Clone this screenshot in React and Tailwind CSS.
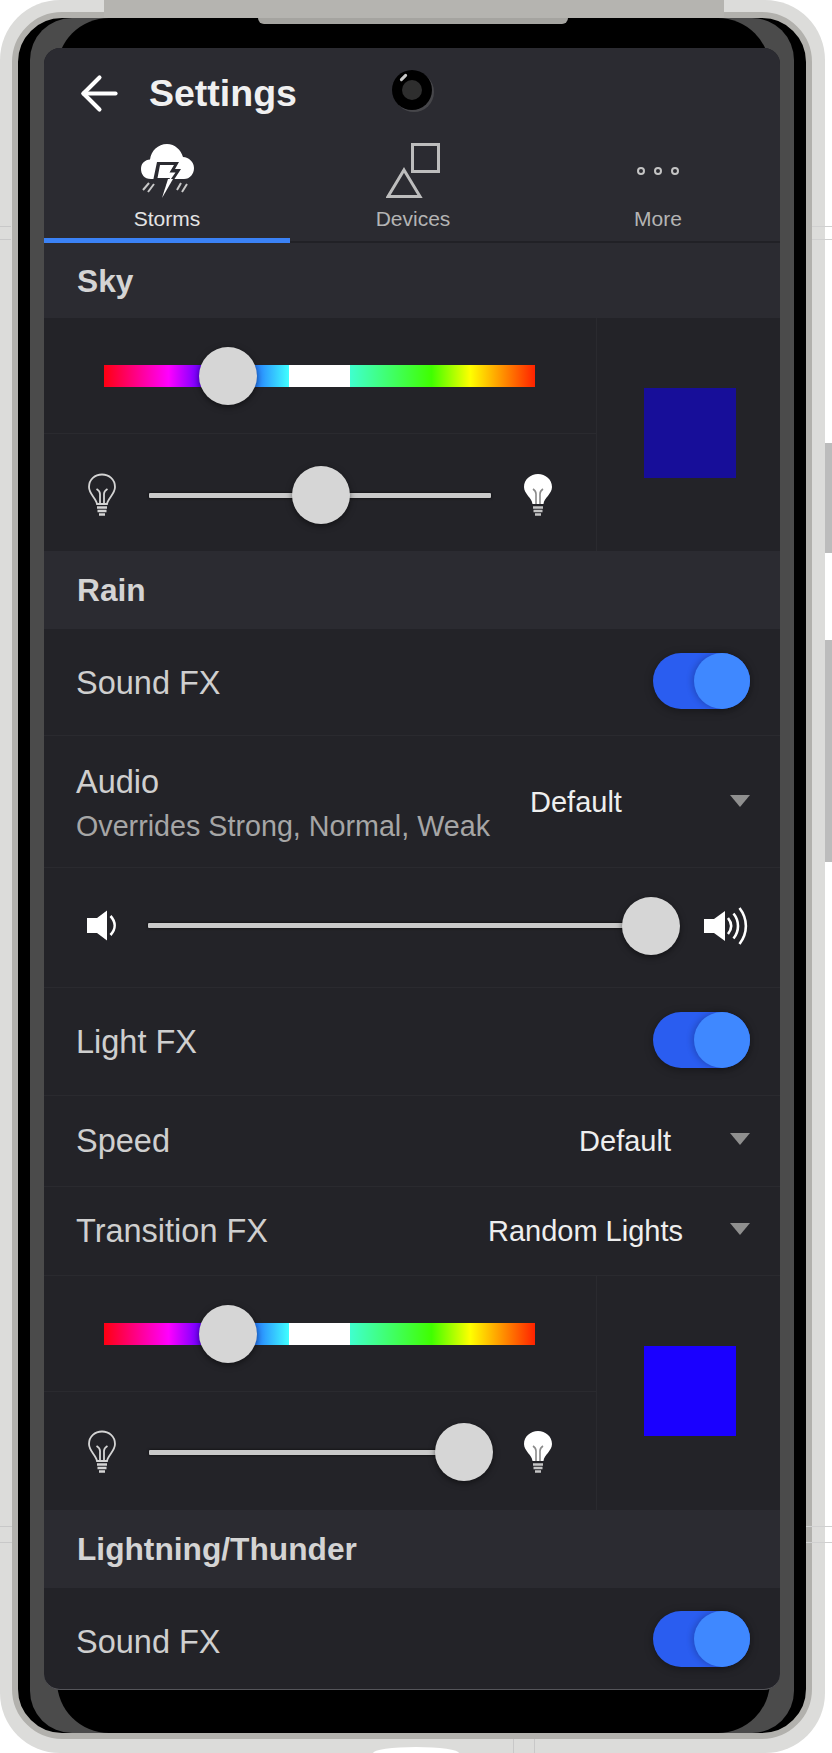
import React from 'react'
import { ArrowLeft } from 'lucide-react'

const hueBar =
  'h-[22px] w-[431px] bg-[linear-gradient(90deg,#ff0010_0%,#ff00ff_15%,#2000ff_26%,#2a8cff_36%,#40ffff_42.9%,#ffffff_42.9%,#ffffff_57%,#40ffd0_57%,#40ff00_76%,#ffff00_85%,#ff2200_100%)]'
const knob = 'absolute top-1/2 h-[58px] w-[58px] -translate-x-1/2 -translate-y-1/2 rounded-full bg-[#d6d6d6] shadow-[0_2px_6px_rgba(0,0,0,0.5)]'
const labelText = 'text-[32.5px] leading-none text-[#cfcfcf]'
const headerText = 'mt-[2px] text-[31.7px] font-bold leading-none text-[#d4d4d4]'
const valueText = 'text-[29px] leading-none text-[#eeeeee]'
const rowBorder = 'border-b border-[#2a2a2f]'

function BulbOutline() {
  return (
    <svg width="30" height="45" viewBox="0 0 30 45" fill="none" stroke="#d4d4d4" strokeWidth="1.8">
      <path d="M10 31 C9 25 2 21 2 14 C2 6.5 8 1.5 15 1.5 C22 1.5 28 6.5 28 14 C28 21 21 25 20 31 Z" />
      <path d="M13 31 V21 C13 18 11 17 9.5 16 M17 31 V21 C17 18 19 17 20.5 16" />
      <path d="M10 34.5 H20 M10.5 38 H19.5 M12 41.5 H18" strokeWidth="2.6" />
    </svg>
  )
}

function BulbFilled() {
  return (
    <svg width="30" height="45" viewBox="0 0 30 45" fill="none">
      <path d="M9.5 31 C9 25 1 21 1 14 C1 6.5 7.5 1 15 1 C22.5 1 29 6.5 29 14 C29 21 21 25 20.5 31 Z" fill="#ffffff" />
      <path d="M13 31 V21 C13 18 11.5 17 10 16 M17 31 V21 C17 18 18.5 17 20 16" stroke="#8a8a8a" strokeWidth="1.6" />
      <path d="M10 34.5 H20 M10.5 38 H19.5 M12 41.5 H18" stroke="#c4c4c4" strokeWidth="2.6" />
    </svg>
  )
}

function SpeakerLow() {
  return (
    <svg width="29" height="31" viewBox="0 0 29 31" fill="none">
      <path d="M0 8 H10 L20 0.5 V30.5 L10 23 H0 Z" fill="#ffffff" />
      <path d="M23.5 6 C29 12 29 19 23.5 25" stroke="#ffffff" strokeWidth="2.6" />
    </svg>
  )
}

function SpeakerHigh() {
  return (
    <svg width="46" height="38" viewBox="0 0 46 38" fill="none" stroke="#ffffff" strokeWidth="2.6">
      <path d="M1 12 H11 L22 4 V34 L11 26 H1 Z" fill="#ffffff" stroke="none" />
      <path d="M25 11 C29 16 29 22 25 27" />
      <path d="M30.5 6.5 C36.5 14 36.5 24 30.5 31.5" />
      <path d="M36.5 1 C45 12 45 26 36.5 37" />
    </svg>
  )
}

function StormIcon() {
  return (
    <svg width="53" height="54" viewBox="0 0 53 54" fill="none">
      <path d="M10 35 C3 35 0 30 0 25 C0 19 4 16 9 15.5 C10 7 17 0 26 0 C34 0 40 6 42 13 C48 13.5 53 18 53 24 C53 30 49 35 43 35 Z" fill="#ffffff" />
      <path d="M16 18 H38 L34 25 H40 L21 54 L25 37 H12 Z" fill="#2b2b31" />
      <path d="M19 21 H33 L28.5 28.5 H34.5 L25 42 L29 34 H16.5 Z" fill="#ffffff" />
      <path d="M21 54 L27 35 H32 Z" fill="#ffffff" />
      <path d="M8 39 L2 46 M13 40 L7 48 M40 39 L36 46 M46 40 L41 48" stroke="#c8c8c8" strokeWidth="2" />
    </svg>
  )
}

function DevicesIcon() {
  return (
    <svg width="54" height="56" viewBox="0 0 54 56" fill="none" stroke="#bdbdbd" strokeWidth="3">
      <rect x="26.5" y="1.5" width="26" height="27" />
      <path d="M18 27 L34 53.5 H2 Z" />
    </svg>
  )
}

function MoreIcon() {
  return (
    <svg width="42" height="10" viewBox="0 0 42 10" fill="none" stroke="#c4c4c4" strokeWidth="2">
      <circle cx="4" cy="5" r="3" />
      <circle cx="21" cy="5" r="3" />
      <circle cx="38" cy="5" r="3" />
    </svg>
  )
}

function Tab({ icon, label, active, width }) {
  return (
    <div className={`flex h-[105px] flex-col items-center pt-[5px] ${width} ${active ? 'border-b-[5px] border-[#3b82f6]' : 'border-b-2 border-[#212126]'}`}>
      <div className="flex h-[55px] items-center justify-center">{icon}</div>
      <div className={`mt-[8px] text-[21px] leading-[26px] ${active ? 'text-[#e4e4e4]' : 'text-[#b4b4b4]'}`}>{label}</div>
    </div>
  )
}

function SectionHeader({ title, height = 'h-[78px]' }) {
  return (
    <div className={`flex items-center bg-[#2b2b31] pl-[33px] ${height}`}>
      <span className={headerText}>{title}</span>
    </div>
  )
}

function Toggle({ shift }) {
  return (
    <div className={`flex h-[56px] w-[97px] justify-end rounded-full bg-[#2a5df0] shadow-[0_2px_8px_rgba(0,0,0,0.35)] ${shift}`}>
      <div className="h-[56px] w-[56px] rounded-full bg-[#3f88ff] shadow-[-2px_0_6px_rgba(0,0,0,0.2)]" />
    </div>
  )
}

function ToggleRow({ label, border = true, height = 'h-[107px]', shift = '-mt-[2px]', labelShift = 'mt-[2px]' }) {
  return (
    <div className={`flex items-center justify-between pl-[32px] pr-[30px] ${height} ${border ? rowBorder : ''}`}>
      <span className={`${labelShift} ${labelText}`}>{label}</span>
      <Toggle shift={shift} />
    </div>
  )
}

function Caret() {
  return <div className="h-0 w-0 border-x-[10.5px] border-t-[12px] border-x-transparent border-t-[#8f8f8f]" />
}

function Track({ width, at }) {
  return (
    <div className={`relative h-[5px] rounded-[1px] bg-[#c9c9c9] shadow-[0_0_3px_rgba(0,0,0,0.8)] ${width}`}>
      <div className={knob} style={{ left: at }} />
    </div>
  )
}

function ColorPanel({ swatch, hueAt, dimAt, height, dimPad, swatchPad }) {
  return (
    <div className={`flex ${height}`}>
      <div className="flex w-[553px] flex-col border-r border-[#2a2a2f]">
        <div className={`flex h-[116px] items-center pl-[60px] ${rowBorder}`}>
          <div className={`relative ${hueBar}`}>
            <div className={knob} style={{ left: hueAt }} />
          </div>
        </div>
        <div className={`flex flex-1 items-center gap-[32px] pl-[43px] ${dimPad}`}>
          <BulbOutline />
          <Track width="w-[342px]" at={dimAt} />
          <BulbFilled />
        </div>
      </div>
      <div className={`flex flex-1 items-center justify-center pl-[2px] ${swatchPad}`}>
        <div className={`h-[90px] w-[92px] ${swatch}`} />
      </div>
    </div>
  )
}

export default function App() {
  return (
    <div className="relative h-[1753px] w-[832px] overflow-hidden bg-white font-['Liberation_Sans',Arial,sans-serif]">
      {/* phone body */}
      <div className="h-[1753px] w-[825px] rounded-[60px] bg-[#dcdcda] pb-[14px] pl-[12px] pr-[13px] pt-[12px]">
        <div className="h-full rounded-[50px] border-[6px] border-[#b2b1ad] bg-black pl-[6px] pr-[12px] shadow-[inset_0_0_0_1px_#000]">
          <div className="relative ml-[6px] h-full rounded-[42px] bg-[#4b4b4b] px-[14px] pt-[30px]">
            <div className="absolute inset-y-0 left-[27px] right-[24px] rounded-[52px] bg-black" />

            {/* screen */}
            <div className="relative h-[1642px] overflow-hidden rounded-[16px] border-b border-[#55555a] bg-[#232328]">
              <div className="bg-[#2b2b31]">
                <div className="flex h-[90px] items-center gap-[22px] pl-[28px]">
                  <ArrowLeft size={55} strokeWidth={1.8} className="text-white" />
                  <span className="mt-[1px] text-[37.5px] font-bold leading-none text-[#f0f0f0]">Settings</span>
                </div>
                <div className="flex">
                  <Tab icon={<StormIcon />} label="Storms" active width="w-[246px]" />
                  <Tab icon={<DevicesIcon />} label="Devices" width="w-[246px]" />
                  <Tab icon={<MoreIcon />} label="More" width="flex-1" />
                </div>
              </div>

              {/* lens sits over the title bar */}
              <div className="absolute left-[348px] top-[22px] flex h-[40px] w-[40px] items-center justify-center rounded-full bg-black shadow-[2px_2px_0_#46464a]">
                <div className="h-[20px] w-[20px] rounded-full bg-[#2e2e2e]" />
                <div className="absolute left-[7px] top-[6px] h-[3px] w-[9px] -rotate-45 rounded-full bg-[#c8c8c8]" />
              </div>

              <SectionHeader title="Sky" height="h-[75px]" />
              <ColorPanel swatch="bg-[#170e99]" hueAt="124px" dimAt="172px" height="h-[233px]" dimPad="pt-[5px]" swatchPad="pb-[3px]" />

              <SectionHeader title="Rain" />
              <ToggleRow label="Sound FX" />

              <div className={`flex h-[132px] items-center pl-[32px] pr-[30px] ${rowBorder}`}>
                <div className="mt-[4px] flex flex-col gap-[14px]">
                  <span className={labelText}>Audio</span>
                  <span className="text-[28.7px] leading-none text-[#a6a6a6]">Overrides Strong, Normal, Weak</span>
                </div>
                <div className="ml-auto flex w-[220px] items-center justify-between">
                  <span className={`mt-[2px] ${valueText}`}>Default</span>
                  <div className="-mt-[2px]"><Caret /></div>
                </div>
              </div>

              <div className={`flex h-[120px] items-center pb-[4px] pl-[43px] ${rowBorder}`}>
                <SpeakerLow />
                <div className="ml-[32px]">
                  <Track width="w-[503px]" at="503px" />
                </div>
                <div className="ml-[52px]">
                  <SpeakerHigh />
                </div>
              </div>

              <ToggleRow label="Light FX" height="h-[108px]" shift="-mt-[4px]" />

              <div className={`flex h-[91px] items-center pl-[32px] pr-[30px] ${rowBorder}`}>
                <span className={labelText}>Speed</span>
                <span className={`ml-auto ${valueText}`}>Default</span>
                <div className="-mt-[4px] ml-[59px]"><Caret /></div>
              </div>

              <div className={`flex h-[89px] items-center pl-[32px] pr-[30px] ${rowBorder}`}>
                <span className={labelText}>Transition FX</span>
                <span className={`ml-auto ${valueText}`}>Random Lights</span>
                <div className="-mt-[4px] ml-[47px]"><Caret /></div>
              </div>

              <ColorPanel swatch="bg-[#1a00ff]" hueAt="124px" dimAt="315px" height="h-[234px]" dimPad="pt-[2px]" swatchPad="pb-[4px]" />

              <SectionHeader title="Lightning/Thunder" />
              <ToggleRow label="Sound FX" border={false} height="h-[103px]" labelShift="mt-[6px]" />
            </div>
          </div>
        </div>
      </div>

      {/* top edge of the body and the speaker notch */}
      <div className="absolute left-[104px] top-0 h-[18px] w-[620px] bg-[#b5b4b0]" />
      <div className="absolute left-[258px] top-[18px] h-[6px] w-[310px] rounded-b-[6px] bg-[#a5a4a0]" />

      {/* side buttons */}
      <div className="absolute right-0 top-[443px] h-[110px] w-[7px] bg-[#bcbcbc]" />
      <div className="absolute right-0 top-[640px] h-[222px] w-[7px] bg-[#bcbcbc]" />

      {/* antenna lines on the body */}
      <div className="absolute left-0 top-[226px] h-[14px] w-[11px] border-y border-[#c8c8c8]" />
      <div className="absolute left-[812px] top-[226px] h-[14px] w-[20px] border-y border-[#d0d0d0]" />
      <div className="absolute left-0 top-[1526px] h-[17px] w-[12px] border-y border-[#c8c8c8]" />
      <div className="absolute left-[806px] top-[1526px] h-[17px] w-[26px] border-y border-[#d0d0d0]" />
      <div className="absolute bottom-0 left-[513px] h-[14px] w-[22px] border-x border-[#c8c8c8]" />
      <div className="absolute -bottom-[6px] left-[373px] h-[12px] w-[86px] rounded-[50%] bg-white" />
    </div>
  )
}
